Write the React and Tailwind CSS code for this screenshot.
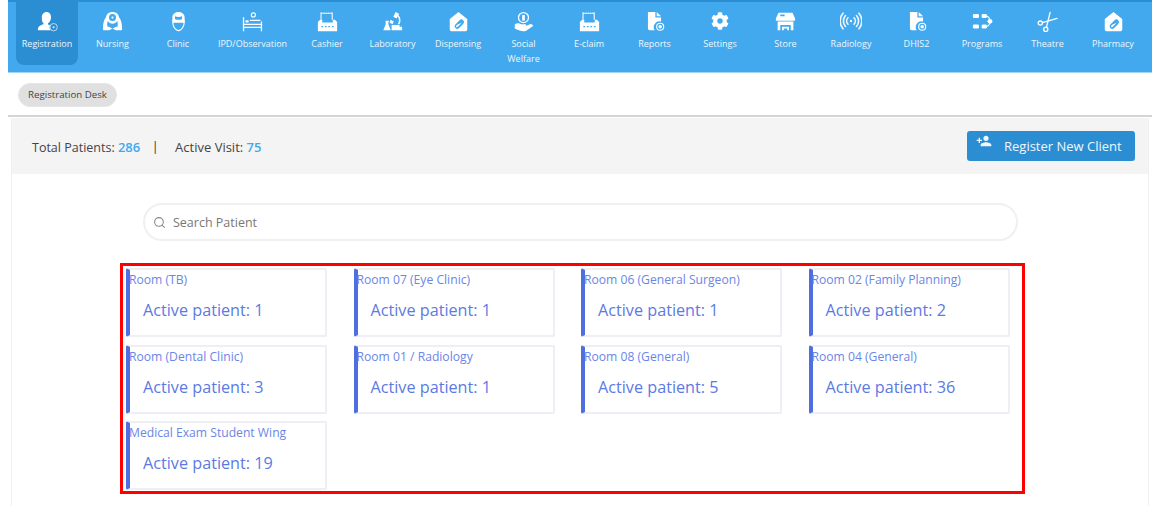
import React from "react";
import { Search } from "lucide-react";
import { FaCog } from "react-icons/fa";
import { MdPersonAdd } from "react-icons/md";

const S = ({ children }) => (
  <svg viewBox="0 0 24 24" className="w-[21px] h-[21px]" fill="white">{children}</svg>
);

const Reg = () => (<S><path d="M11 1c3 0 5 2.400 5 6s-2 6-3.400 7v1.500c.9.400 1.700.8 2.400 1.200-1 1.800-.9 3.600.4 5.300H2c-.6 0-1-.4-1-1 0-3 3-5 6.500-5.800V14C6 13 5.500 10 5.500 7c0-3.600 2.500-6 5.500-6z"/><circle cx="19" cy="18.500" r="4.200" fill="none" stroke="white" strokeOpacity=".75" strokeWidth="1"/><circle cx="19" cy="18.500" r="1.200" fillOpacity=".8"/></S>);
const Nurse = () => (<S><path fillRule="evenodd" d="M12 1c4.500 0 7 2.500 7.500 6 2.500 3 3.500 8 3.500 13.500 0 1-.5 1.500-1.500 1.500H17c-1.500 0-3-.5-5-2-2 1.500-3.500 2-5 2H2.500C1.500 22 1 21.500 1 20.500 1 15 2 10 4.500 7 5 3.500 7.500 1 12 1zM12 3.500a4 4 0 1 0 0 8 4 4 0 0 0 0-8zM6.500 11.500c1.200 1.800 3.400 3 5.500 3s4.300-1.200 5.500-3c.5 2 .7 4 .5 6-2 .5-4.500 1.500-6 3-1.500-1.500-4-2.500-6-3-.2-2 0-4 .5-6z"/><circle cx="12" cy="7.500" r="1.300"/></S>);
const Clinic = () => (<S><path fillRule="evenodd" d="M12 1c4.500 0 7 3 7 6v6.500H5V7c0-3 2.500-6 7-6zM8 6v3.500c2.500 1.500 5.500 1.500 8 0V6c-2.500 1-5.500 1-8 0z"/><path d="M5 10h14v4c0 4-3.500 9-7 9s-7-5-7-9zm1.300 1.300V14c0 3.500 3 7.700 5.700 7.700s5.700-4.200 5.700-7.700v-2.700z" fillRule="evenodd"/></S>);
const Bed = () => (<S><path fillRule="evenodd" d="M13 1.500a3 3 0 1 1 0 6 3 3 0 0 1 0-6zm0 1.300a1.700 1.700 0 1 0 0 3.400 1.700 1.700 0 0 0 0-3.400z"/><path d="M1 7h1.500v7.500h19V12H23v11h-1.500v-3.500h-19V23H1zM2.500 16v2h19v-2z" fillRule="evenodd"/><path d="M4 10.500h3.500V13H4zM9 10h12v1.500H9z"/></S>);
const Cash = () => (<S><path fillRule="evenodd" d="M4 1.500h1l1 1 1-1 1 1 1-1 1 1 1-1 1 1 1-1 1 1 1-1 1 1 1-1h1V10h-1.200V3H5.200v7H4z"/><path fillRule="evenodd" d="M3.500 10H6v3h12v-3h2.500L23 12.500V23H1V12.500zM5 17v1.500h2V17zm4 0v1.500h2V17zm4 0v1.500h2V17zm4 0v1.500h2V17z"/></S>);
const Lab = () => (<S><path d="M15.500 1l4 2-.8 1.600c2.800 2.700 3.200 7.400 1.300 10.400h-2c2-2.400 1.800-6.300-.2-8.600l-1.300 2.300-3.600-2.100zM10 10l3.500 2-1.500 3-3.500-2zM11 16h9v2h3v4H11z"/><path fillRule="evenodd" d="M4 11h4v1H7.300v3L10 22H1.500l2.700-7v-3H4z"/></S>);
const Tag = () => (<S><path fillRule="evenodd" d="M12 1l10 8.200V21a2 2 0 0 1-2 2H4a2 2 0 0 1-2-2V9.200zM17.400 10.600a3 3 0 0 0-4.200 0l-5 5a3 3 0 0 0 4.200 4.200l5-5a3 3 0 0 0 0-4.200zM15.600 13.500l-4.800 4.800a1 1 0 0 1-1.400-1.400l1.600-1.600z"/></S>);
const Social = () => (<S><path fillRule="evenodd" d="M12 1a6.500 6.500 0 1 1 0 13 6.500 6.500 0 0 1 0-13zm0 1.500a5 5 0 1 0 0 10 5 5 0 0 0 0-10z"/><path d="M10.500 4.500h3V11h-3z"/><path d="M2 15.500c2-1.800 5-2 7-.5h5c1 0 1.500 1 .8 2l4.700-2c1.500-.5 3.500 1 3.500 2l-8 5.500C12 24 8 23 2 20z"/></S>);
const Report = () => (<S><path d="M4.500 1H13v6.500h6.500v4.600A6.500 6.500 0 0 0 12.300 22H6.500a2 2 0 0 1-2-2z"/><path d="M14.500 1l5 5h-5z"/><circle cx="18.500" cy="18" r="4" fill="none" stroke="white" strokeWidth="1.300"/><circle cx="18.500" cy="18" r="2"/></S>);
const Store = () => (<S><path fillRule="evenodd" d="M4 2h16l3 6.500v2.500H1V8.500zM6 4v2h5V4z"/><path fillRule="evenodd" d="M3 12h18v10h-3v-6H6v6H3z"/><path d="M8 18h8v4h-2v-2h-4v2H8z"/></S>);
const Radio = () => (<svg viewBox="0 0 24 24" className="w-[22px] h-[22px]" fill="none" stroke="white" strokeOpacity=".9" strokeWidth="1.800" strokeLinecap="round"><circle cx="12" cy="12" r="1.300" fill="white" stroke="none"/><path d="M8.700 8.500a5 5 0 0 0 0 7M15.300 8.500a5 5 0 0 1 0 7M6 6a9 9 0 0 0 0 12M18 6a9 9 0 0 1 0 12M3.300 3.500a13 13 0 0 0 0 17M20.700 3.500a13 13 0 0 1 0 17"/></svg>);
const Prog = () => (<S><rect x="1" y="3.500" width="7" height="4.500" rx="1.500"/><rect x="11" y="3.500" width="6" height="4.500" rx="1.500"/><rect x="1" y="15.500" width="7" height="4.500" rx="1.500"/><rect x="11" y="15.500" width="6" height="4.500" rx="1.500"/><circle cx="20.500" cy="11.800" r="2.800"/><path d="M16.500 5.700c2 .5 3.500 2.300 4 4.500M16.500 17.800c2-.5 3.500-2.300 4-4" stroke="white" strokeWidth="1.200" fill="none"/></S>);
const Sciss = () => (<svg viewBox="0 0 24 24" className="w-[21px] h-[21px]" fill="none" stroke="white" strokeWidth="1.500" strokeLinecap="round"><circle cx="3.800" cy="13.800" r="2.400"/><circle cx="10" cy="21" r="2.400"/><path d="M6.200 13.300L23 8.500"/><path d="M10.800 18.700L15 1.500"/></svg>);

const items = [
  ["Registration", Reg, 62, true],
  ["Nursing", Nurse, 62],
  ["Clinic", Clinic, 62],
  ["IPD/Observation", Bed, 80],
  ["Cashier", Cash, 62],
  ["Laboratory", Lab, 62],
  ["Dispensing", Tag, 62],
  ["Social Welfare", Social, 62],
  ["E-claim", Cash, 62],
  ["Reports", Report, 62],
  ["Settings", () => <FaCog className="w-[18px] h-[18px] text-white" />, 62],
  ["Store", Store, 62],
  ["Radiology", Radio, 62],
  ["DHIS2", Report, 62],
  ["Programs", Prog, 62],
  ["Theatre", Sciss, 62],
  ["Pharmacy", Tag, 62],
];

const rooms = [
  ["Room (TB)", 1],
  ["Room 07 (Eye Clinic)", 1],
  ["Room 06 (General Surgeon)", 1],
  ["Room 02 (Family Planning)", 2],
  ["Room (Dental Clinic)", 3],
  ["Room 01 / Radiology", 1],
  ["Room 08 (General)", 5],
  ["Room 04 (General)", 36],
  ["Medical Exam Student Wing", 19],
];

export default function App() {
  return (
    <div className="w-[1162px] h-[506px] overflow-hidden bg-white font-['Open_Sans',sans-serif] text-[#444]">
      <nav className="ml-[8px] w-[1144px] h-[73px] bg-[#42a9ee] border-t-2 border-t-[#2b8ed3] border-b border-b-[#a5d5f5] flex items-start pl-[8px] gap-[3.5px]">
        {items.map(([label, Icon, w, active]) => (
          <div
            key={label}
            style={{ width: w }}
            className={`shrink-0 h-[63px] flex flex-col items-center pt-[9px] rounded-b-[8px] text-[#eef7fd] ${active ? "bg-[#2b8ed3]" : ""}`}
          >
            <div className="h-[20px] flex items-center justify-center"><Icon /></div>
            <div className="mt-[5px] text-[9px] leading-[15px] text-center whitespace-pre-line">
              {label === "Social Welfare" ? "Social\nWelfare" : label}
            </div>
          </div>
        ))}
      </nav>

      <div className="pl-[18px] pt-[7px] h-[42px]">
        <span className="inline-flex items-center h-[24px] w-[99px] justify-center rounded-full bg-[#e0e0e0] border border-[#e6e6e6] text-[9.7px] text-[#444]">Registration Desk</span>
      </div>

      <div className="ml-[8px] w-[1144px] border-t-2 border-t-[#d4d4d4]">
        <div className="ml-[3px] mr-[3px] border-x border-x-[#f0f0f0] h-[400px]">
          <div className="mt-[1px] h-[56px] bg-[#f4f4f4] flex items-center justify-between pl-[20px] pr-[13px]">
            <div className="text-[12.5px] text-[#444] flex pt-[3px]">
              <span>Total Patients: <b className="font-semibold text-[13px] text-[#42a9ee]">286</b></span>
              <span className="ml-[11.5px] text-[#333] font-medium">|</span>
              <span className="ml-[16.5px] text-[13px]">Active Visit: <b className="font-semibold text-[#42a9ee]">75</b></span>
            </div>
            <button className="w-[168px] h-[30px] mb-[1px] bg-[#2b8ed3] rounded-[3px] text-[#eef7fd] text-[13px] flex items-start pl-[9px]">
              <MdPersonAdd className="w-[16px] h-[16px] mt-[2px] mr-[12px]" />
              <span className="mt-[6px] leading-[18px]">Register New Client</span>
            </button>
          </div>

          <div className="mt-[29px] ml-[131px] w-[875px] h-[38px] rounded-full border-2 border-[#f0f0f0] flex items-center pl-[8px] text-[12.5px] text-[#777]">
            <Search className="w-[13px] h-[13px] text-[#888] mr-[7px]" strokeWidth={2} />
            <span className="mt-[2px]">Search Patient</span>
          </div>

          <div className="mt-[22px] ml-[108px] w-[905px] h-[231px] border-[3px] border-[#ff0000] pl-[3px] pt-[2px]">
            <div className="grid grid-cols-[201px_201px_201px_201px] gap-x-[26.5px] gap-y-[7.5px]">
              {rooms.map(([name, n]) => (
                <div key={name} className="h-[69px] border-2 border-[#eeeef4] border-l-4 border-l-[#4f6fdf] rounded-[2px] bg-white">
                  <div className="text-[12.15px] leading-[16px] mt-[2px] -ml-[1px] text-[#6b86e6] whitespace-nowrap">{name}</div>
                  <div className="text-[16.2px] leading-[22px] mt-[11px] ml-[13px] text-[#5b7ae2]">Active patient: {n}</div>
                </div>
              ))}
            </div>
          </div>
        </div>
      </div>
    </div>
  );
}
